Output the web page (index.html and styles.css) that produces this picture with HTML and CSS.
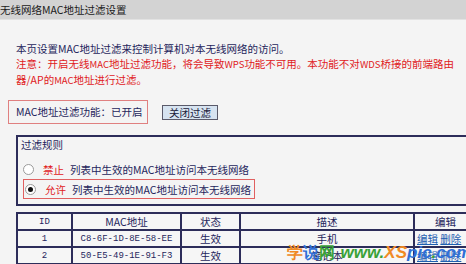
FILE: index.html
```html
<!DOCTYPE html>
<html>
<head>
<meta charset="utf-8">
<link rel="stylesheet" href="styles.css">
</head>
<body>
<div class="hdr">无线网络MAC地址过滤设置</div>
<div class="main">
  <div class="intro">
    <div class="navy">本页设置MAC地址过滤来控制计算机对本无线网络的访问。</div>
    <div class="red">注意：开启无线<span class="lat">MAC</span>地址过滤功能，将会导致<span class="lat">WPS</span>功能不可用。本功能不对<span class="lat">WDS</span>桥接的前端路由<br>器/AP的<span class="lat">MAC</span>地址进行过滤。</div>
  </div>
  <div class="status">
    <div class="statusbox">MAC地址过滤功能：已开启</div>
    <div class="btn">关闭过滤</div>
  </div>
  <div class="rules">
    <div class="rules-title">过滤规则</div>
    <div class="rule"><span class="radio"></span><span class="red lbl">禁止</span><span>列表中生效的MAC地址访问本无线网络</span></div>
    <div class="rule sel"><span class="radio on"></span><span class="red lbl">允许</span><span>列表中生效的MAC地址访问本无线网络</span></div>
  </div>
  <table class="tbl">
    <colgroup><col class="c1"><col class="c2"><col class="c3"><col class="c4"><col class="c5"></colgroup>
    <tr><th class="mono">ID</th><th>MAC地址</th><th>状态</th><th>描述</th><th>编辑</th></tr>
    <tr><td class="mono">1</td><td class="mono">C8-6F-1D-8E-58-EE</td><td>生效</td><td>手机</td><td class="links"><a>编辑</a> <a>删除</a></td></tr>
    <tr><td class="mono">2</td><td class="mono">50-E5-49-1E-91-F3</td><td>生效</td><td>笔记本</td><td class="links"><a>编辑</a> <a>删除</a></td></tr>
  </table>
</div>
<div class="wm"><span class="o">学</span><span class="b">说</span><span class="g">网</span> <span class="g it">www.</span><span class="o it">XS</span><span class="b it">pic</span><span class="g it">.</span><span class="b it">com</span></div>
</body>
</html>
```
FILE: styles.css
```css
html, body {
  margin: 0;
  padding: 0;
  width: 466px;
  height: 264px;
  overflow: hidden;
  background: #f4f4f4;
  font-family: "Noto Sans CJK SC", "Liberation Sans", sans-serif;
  font-size: 10.5px;
  color: #1f1f5c;
  position: relative;
}
.hdr {
  height: 19px;
  line-height: 19px;
  background: #d3d3d3;
  border-bottom: 1px solid #e2e2e2;
  font-size: 10.5px;
  color: #1a1a1a;
  white-space: nowrap;
}
.main {
  padding-left: 16px;
}
.intro {
  padding-top: 21px;
  line-height: 15px;
  white-space: nowrap;
}
.lat { font-size: 9.5px; }
.navy { color: #1f1f5c; }
.red { color: #e0201c; }
.status {
  display: flex;
  align-items: center;
  margin-top: 12px;
  margin-left: -8px;
}
.statusbox {
  box-sizing: border-box;
  width: 140px;
  height: 24px;
  line-height: 22px;
  border: 1px solid #e08080;
  padding-left: 7px;
  white-space: nowrap;
}
.btn {
  box-sizing: border-box;
  margin-left: 14px;
  width: 56px;
  height: 15px;
  line-height: 13px;
  text-align: center;
  background: #d6e3f0;
  border: 1px solid #5a5a6a;
  color: #1a1a3a;
  font-size: 10.5px;
}
.rules {
  margin-top: 11px;
  width: 480px;
  border: 2px solid #2d2d5a;
  padding: 0 0 5px 3px;
}
.rules-title {
  line-height: 16px;
  height: 16px;
}
.rule {
  display: flex;
  width: max-content;
  align-items: center;
  height: 16px;
  margin-top: 8px;
  margin-left: 2px;
  white-space: nowrap;
}
.rule.sel {
  box-sizing: border-box;
  height: 20px;
  margin-top: 2px;
  border: 1px solid #e06060;
  padding-right: 3px;
}
.radio {
  box-sizing: border-box;
  width: 11px;
  height: 11px;
  border-radius: 50%;
  border: 1px solid #9a9a9a;
  background: #fff;
  margin-right: 9px;
  position: relative;
}
.rule.sel .radio { margin-left: 1px; }
.radio.on::after {
  content: "";
  position: absolute;
  left: 2px;
  top: 2px;
  width: 5px;
  height: 5px;
  border-radius: 50%;
  background: #111;
}
.lbl { margin-right: 6px; }
.tbl {
  margin-top: 6px;
  border-collapse: collapse;
  table-layout: fixed;
  width: 460px;
  border: 2px solid #2d2d5a;
}
.c1 { width: 55px; }
.c2 { width: 109px; }
.c3 { width: 59px; }
.c4 { width: 174px; }
.c5 { width: 63px; }
.tbl th, .tbl td {
  border: 2px solid #2d2d5a;
  height: 15px;
  padding: 0;
  text-align: center;
  font-weight: normal;
  line-height: 14px;
  background: #f6f6f6;
  white-space: nowrap;
}
.mono {
  font-family: "Liberation Mono", monospace;
  font-size: 9px;
}
.links {
  text-align: left !important;
  padding-left: 2px !important;
}
.links a {
  color: #1e5fb0;
  text-decoration: underline;
}
.wm {
  position: absolute;
  left: 287px;
  top: 243px;
  font-family: "DejaVu Sans", sans-serif;
  font-weight: bold;
  font-size: 16px;
  line-height: 20px;
  white-space: nowrap;
}
.wm .o { color: #f08a24; }
.wm .b { color: #2f6fd6; }
.wm .g { color: #3aa238; }
.wm .it { font-style: italic; font-family: "Liberation Sans", sans-serif; font-size: 17px; }
```
